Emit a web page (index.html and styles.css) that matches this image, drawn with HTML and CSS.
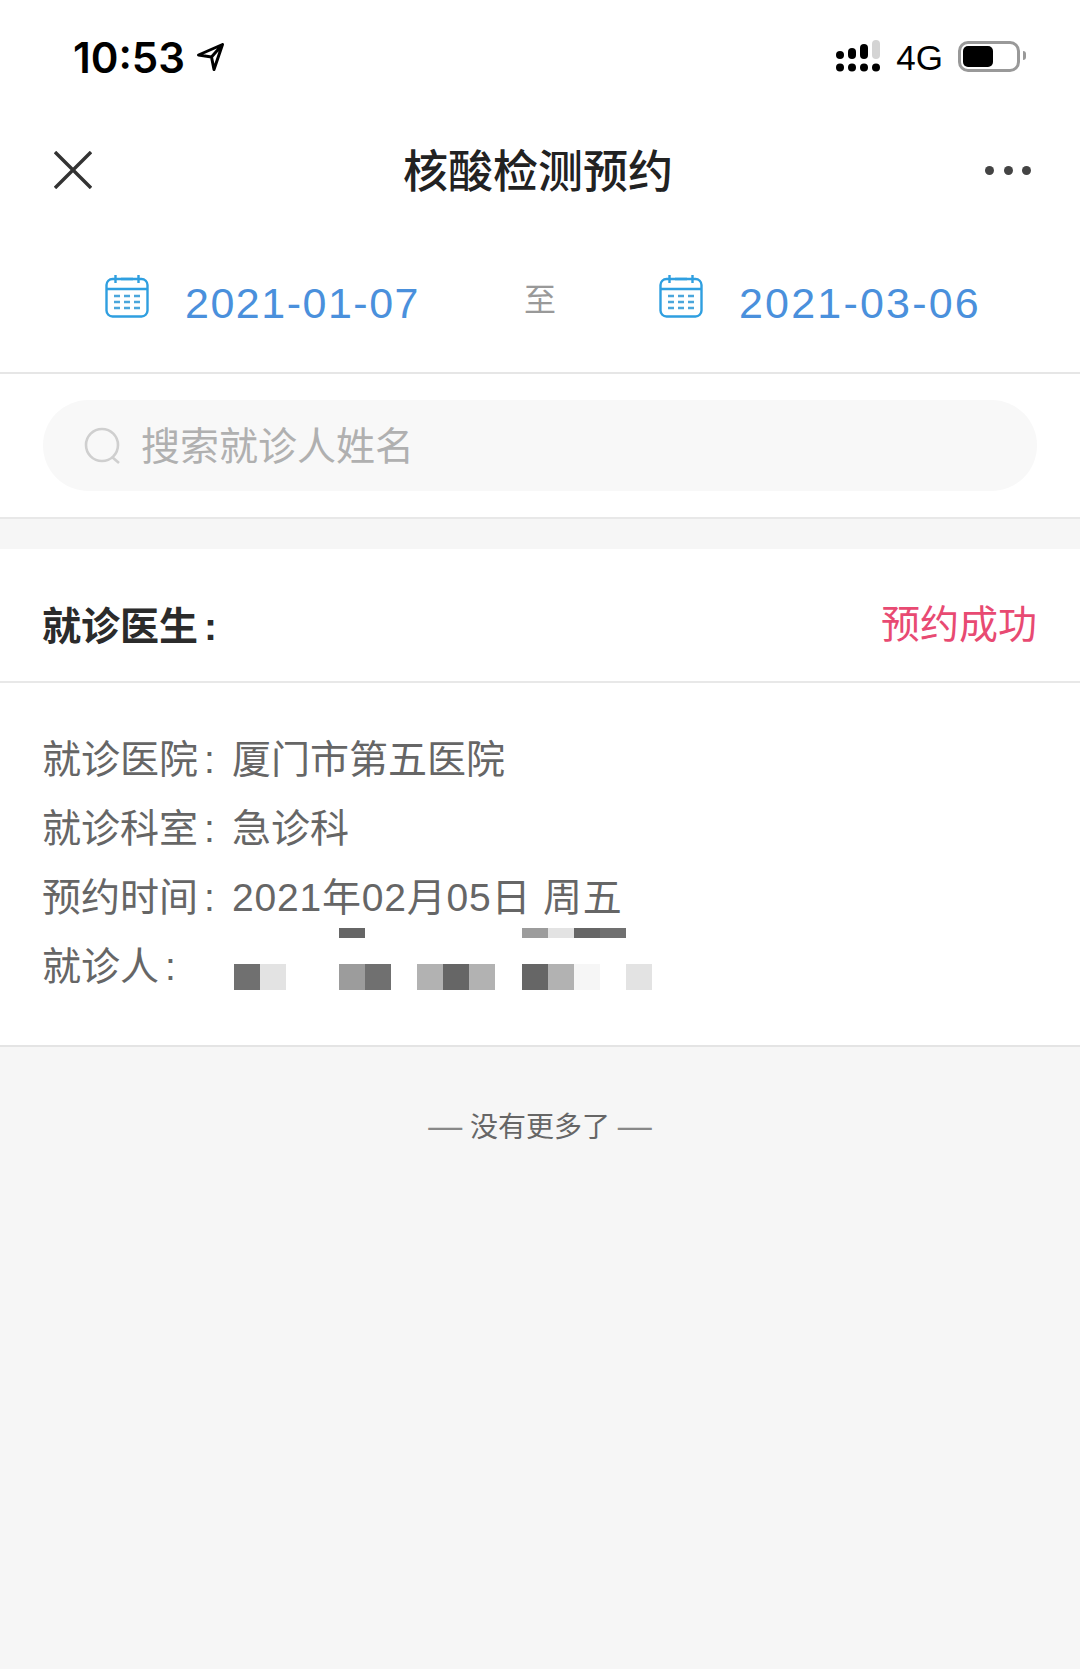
FILE: index.html
```html
<!DOCTYPE html>
<html lang="zh-CN">
<head>
  <meta charset="UTF-8">
  <meta name="viewport" content="width=device-width, initial-scale=1.0">
  <title>核酸检测预约</title>
  <link rel="stylesheet" href="styles.css">
</head>

<body>
  <!-- Status Bar -->
  <div class="status-bar">
    <div class="status-left">
      <span class="time">10:53</span>
      <svg class="arrow" viewBox="0 0 27 28" width="27" height="28">
        <path d="M1.5 12 L25.5 1.5 L17 26.5 L14.5 14 Z M14.5 14 L25.5 1.5" fill="none" stroke="#000" stroke-width="3" stroke-linejoin="round"/>
      </svg>
    </div>
    <div class="status-right">
      <svg class="signal" viewBox="0 0 44 32" width="44" height="32">
        <g fill="#000">
          <circle cx="4" cy="27.5" r="4"/><circle cx="16" cy="27.5" r="4"/><circle cx="28" cy="27.5" r="4"/><circle cx="40" cy="27.5" r="4"/>
          <rect x="0" y="11" width="8" height="8" rx="4"/>
          <rect x="12" y="8" width="8" height="11" rx="4"/>
          <rect x="24" y="4" width="8" height="15" rx="4"/>
        </g>
        <rect x="36" y="0" width="8" height="19" rx="4" fill="#d4d4d4"/>
      </svg>
      <span class="network">4G</span>
      <div class="battery"><div class="battery-level"></div></div>
      <div class="battery-cap"></div>
    </div>
  </div>

  <!-- Nav Bar -->
  <div class="nav-bar">
    <svg class="nav-close" viewBox="0 0 38 38" width="38" height="38">
      <path d="M1 1 L37 37 M37 1 L1 37" stroke="#333" stroke-width="3.4" fill="none"/>
    </svg>
    <h1 class="nav-title">核酸检测预约</h1>
    <div class="nav-more"><i></i><i></i><i></i></div>
  </div>

  <!-- Date Range -->
  <div class="date-range">
    <div class="date-item">
      <svg class="calendar" viewBox="0 0 44 44" width="44" height="44">
        <rect x="1.5" y="5" width="41" height="37.5" rx="6" fill="none" stroke="#2f9fe0" stroke-width="2.4"/>
        <path d="M1.5 15 H42.5 M10.5 1 V9 M33.5 1 V9 M16 5 H28" stroke="#2f9fe0" stroke-width="2.4" fill="none"/>
        <path d="M9 22 H15 M19 22 H25 M29 22 H35 M9 28 H15 M19 28 H25 M29 28 H35 M9 34 H15 M19 34 H25 M29 34 H35" stroke="#4aa6dc" stroke-width="2.6" fill="none"/>
      </svg>
      <span class="date-text">2021-01-07</span>
    </div>
    <span class="date-sep">至</span>
    <div class="date-item">
      <svg class="calendar" viewBox="0 0 44 44" width="44" height="44">
        <rect x="1.5" y="5" width="41" height="37.5" rx="6" fill="none" stroke="#2f9fe0" stroke-width="2.4"/>
        <path d="M1.5 15 H42.5 M10.5 1 V9 M33.5 1 V9 M16 5 H28" stroke="#2f9fe0" stroke-width="2.4" fill="none"/>
        <path d="M9 22 H15 M19 22 H25 M29 22 H35 M9 28 H15 M19 28 H25 M29 28 H35 M9 34 H15 M19 34 H25 M29 34 H35" stroke="#4aa6dc" stroke-width="2.6" fill="none"/>
      </svg>
      <span class="date-text wide">2021-03-06</span>
    </div>
  </div>

  <!-- Search -->
  <div class="search-wrap">
    <div class="search-box">
      <svg class="search-icon" viewBox="0 0 38 38" width="38" height="38">
        <circle cx="18" cy="18" r="16" fill="none" stroke="#cfcfcf" stroke-width="2.6"/>
        <path d="M28 30 L35 36" stroke="#cfcfcf" stroke-width="2.6" fill="none"/>
      </svg>
      <span class="search-text">搜索就诊人姓名</span>
    </div>
  </div>

  <!-- Appointment Card -->
  <div class="card">
    <div class="card-header">
      <span class="doctor">就诊医生<span class="colon">:</span></span>
      <span class="state">预约成功</span>
    </div>
    <div class="card-body">
      <p class="row"><span class="label">就诊医院<span class="colon">:</span></span><span class="value">厦门市第五医院</span></p>
      <p class="row"><span class="label">就诊科室<span class="colon">:</span></span><span class="value">急诊科</span></p>
      <p class="row"><span class="label">预约时间<span class="colon">:</span></span><span class="value datetime">2021年02月05日 周五</span></p>
      <div class="row patient">
        <span class="label">就诊人<span class="colon">:</span></span>
        <div class="mosaic">
          <div class="mosaic-row top">
            <i></i><i></i><i></i><i></i><i class="g1"></i><i></i><i></i><i></i><i></i><i></i><i></i><i class="g3"></i><i class="g5"></i><i class="g1"></i><i class="g2"></i><i></i>
          </div>
          <div class="mosaic-row bottom">
            <i class="g2"></i><i class="g5"></i><i></i><i></i><i class="g3"></i><i class="g2"></i><i></i><i class="g4"></i><i class="g1"></i><i class="g4"></i><i></i><i class="g1"></i><i class="g4"></i><i class="g6"></i><i></i><i class="g5"></i>
          </div>
        </div>
      </div>
    </div>
  </div>

  <div class="no-more"><span class="dash">—</span> 没有更多了 <span class="dash">—</span></div>
</body>
</html>
```

FILE: styles.css
```css
* {
  box-sizing: border-box;
}

body {
  margin: 0;
  height: 1669px;
  overflow: hidden;
  background-color: #f6f6f6;
  color: #333;
  font-family: "Liberation Sans", "Noto Sans CJK SC", sans-serif;
}

/* Status Bar */
.status-bar {
  height: 113px;
  background: #fff;
  display: flex;
  justify-content: space-between;
  padding: 38px 54px 0 73px;
}

.status-left {
  display: flex;
  align-items: flex-start;
  gap: 12px;
}

.time {
  font-family: "Inter", sans-serif;
  font-size: 42px;
  line-height: 40px;
  font-weight: 600;
  color: #000;
}

.arrow {
  margin-top: 5px;
}

.status-right {
  display: flex;
  align-items: flex-start;
}

.signal {
  margin-top: 2px;
}

.network {
  margin-left: 16px;
  font-size: 35px;
  line-height: 40px;
  color: #000;
}

.battery {
  margin-left: 15px;
  margin-top: 3px;
  width: 62px;
  height: 31px;
  border: 3px solid #999;
  border-radius: 10px;
  padding: 2px;
}

.battery-level {
  width: 30px;
  height: 21px;
  background: #000;
  border-radius: 5px;
}

.battery-cap {
  margin-top: 13px;
  margin-left: 3px;
  width: 3px;
  height: 9px;
  background: #999;
  border-radius: 0 3px 3px 0;
}

/* Nav Bar */
.nav-bar {
  height: 114px;
  background: #fff;
  display: grid;
  grid-template-columns: 1fr auto 1fr;
  align-items: center;
  padding: 0 49px 0 54px;
}

.nav-title {
  margin: -4px 9px 0 0;
  font-size: 45px;
  font-weight: 500;
  color: #222;
}

.nav-more {
  justify-self: end;
  display: flex;
  gap: 9.5px;
}

.nav-more i {
  width: 9px;
  height: 9px;
  border-radius: 50%;
  background: #444;
}

/* Date Range */
.date-range {
  height: 147px;
  background: #fff;
  border-bottom: 2px solid #e6e6e6;
  display: grid;
  grid-template-columns: 419px 135px auto;
  align-items: center;
  padding: 8px 0 0 105px;
}

.date-item {
  display: flex;
  align-items: center;
  gap: 36px;
}

.calendar {
  margin-top: -16px;
}

.date-text {
  font-size: 43px;
  color: #4a90dc;
  letter-spacing: 1.5px;
}

.date-text.wide {
  letter-spacing: 2.2px;
}

.date-sep {
  font-size: 32px;
  color: #999;
  margin-top: -14px;
}

/* Search */
.search-wrap {
  height: 145px;
  background: #fff;
  border-bottom: 2px solid #e8e8e8;
  padding: 26px 43px 0;
}

.search-box {
  height: 91px;
  border-radius: 46px;
  background: #f8f8f8;
  display: flex;
  align-items: center;
  padding-left: 41px;
  gap: 19px;
}

.search-text {
  margin-top: -5px;
  font-size: 39px;
  color: #b0b0b0;
}

/* Card */
.card {
  margin-top: 30px;
  background: #fff;
  border-bottom: 2px solid #e4e4e4;
}

.card-header {
  height: 134px;
  border-bottom: 2px solid #e8e8e8;
  display: flex;
  align-items: center;
  justify-content: space-between;
  padding: 12px 43px 0 42px;
}

.doctor {
  margin-top: 4px;
  font-size: 39px;
  font-weight: 700;
  color: #2b2b2b;
}

.colon {
  margin-left: 6px;
}

.state {
  font-size: 39px;
  color: #e84a72;
}

.card-body {
  padding: 38px 42px 31px;
}

.row {
  margin: 0;
  height: 69px;
  display: flex;
  align-items: center;
  font-size: 39px;
  color: #666;
}

.label {
  width: 190px;
  flex-shrink: 0;
  white-space: nowrap;
}

.value {
  color: #666;
  white-space: nowrap;
}

.value.datetime {
  letter-spacing: 0.8px;
}

.patient {
  height: 86px;
  align-items: flex-start;
}

.patient .label {
  margin-top: 7px;
}

/* Blurred patient name */
.mosaic {
  margin-left: 2px;
}

.mosaic-row {
  display: grid;
  grid-template-columns: repeat(16, 26.15px);
}

.mosaic-row.top {
  height: 10px;
}

.mosaic-row.bottom {
  height: 26px;
  margin-top: 26px;
}

.g1 { background: #666; }
.g2 { background: #707070; }
.g3 { background: #9c9c9c; }
.g4 { background: #b2b2b2; }
.g5 { background: #e3e3e3; }
.g6 { background: #f6f6f6; }

/* Footer */
.no-more {
  margin-top: 53px;
  text-align: center;
  font-size: 28px;
  line-height: 50px;
  color: #666;
}

.dash {
  font-size: 34px;
  color: #888;
}
```
